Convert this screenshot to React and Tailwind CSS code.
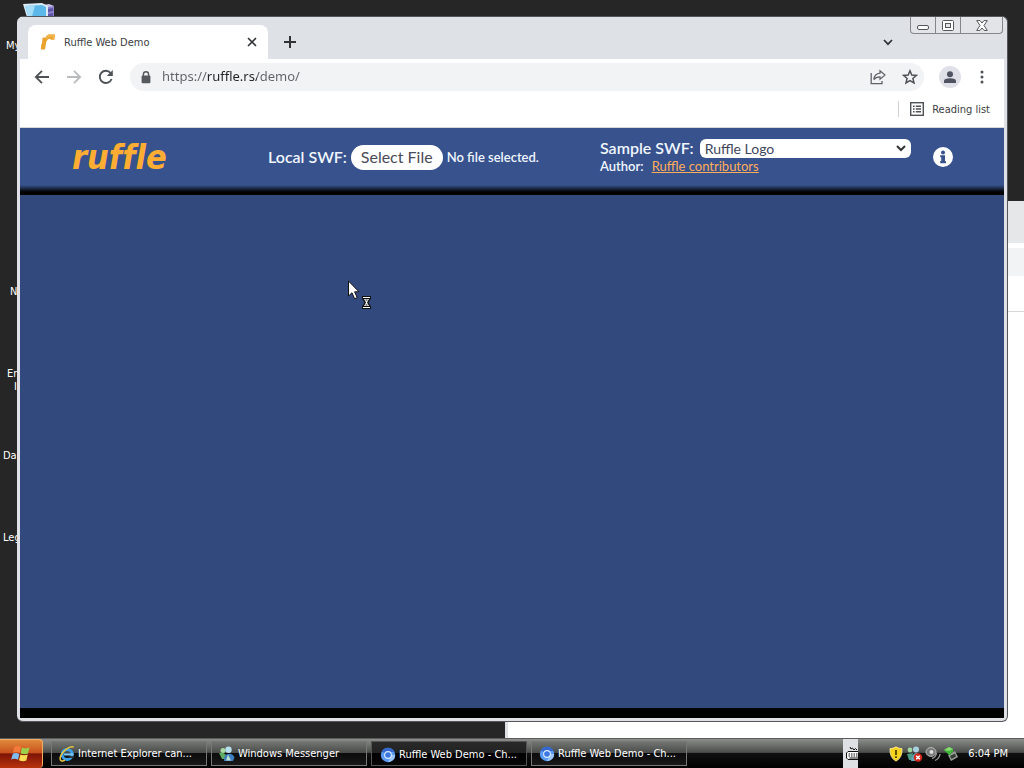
import React from "react";

const UI = "font-['DejaVu_Sans_Condensed','DejaVu_Sans',sans-serif] [font-stretch:condensed]";

const desktopLabels = [
  { text: "My", pad: "pl-[6px]" },
  { text: "", pad: "pl-0" },
  { text: "", pad: "pl-0" },
  { text: "N", pad: "pl-[10px]" },
  { text: "En", second: "I", pad: "pl-[7px]" },
  { text: "Da", pad: "pl-[3px]" },
  { text: "Leg", pad: "pl-[3px]" },
];

function ComputerIcon() {
  return (
    <svg className="absolute left-[22px] top-[2px]" width="34" height="30" viewBox="0 0 34 30" aria-hidden="true">
      <path d="M21 3 L32 4 V22 L21 24 Z" fill="#8d84c8" />
      <path d="M21 3 L27 2 L32 4 L26 5 Z" fill="#c9c5ea" />
      <path d="M26 7 L31 6 V9 L26 10 Z M26 12 L31 11 V14 L26 15 Z" fill="#5d54a8" />
      <path d="M1 2 L20 1 L26 4 V22 L7 22 Z" fill="#dcebf6" />
      <path d="M3 4 L20 3 L24 5 V20 L8 20 Z" fill="#5cb8e8" />
      <path d="M3 4 L13 3.5 L9 18 L8 20 Z" fill="#a5dcf6" />
    </svg>
  );
}

function Favicon() {
  return (
    <svg width="16" height="18" viewBox="0 0 16 18" aria-hidden="true">
      <path d="M2.6 4.5 L6 4.5 L6.4 3 L8.4 1.5 L15 1.5 L14.2 6.8 L10.4 6.8 L10.6 5.6 L8 6.2 L6.4 8.6 L5.8 11.5 L5 16.5 L.8 16.5 L1.4 11 L2 10.500 Z" fill="#eaa12e" />
      <path d="M6.4 3 L8.4 1.5 L15 1.5 L14.2 6.8 L12.4 6.8 L12.6 3.8 L9 4 L5.8 7 Z" fill="#f3b44a" />
    </svg>
  );
}

function WindowFlag() {
  return (
    <svg width="22" height="20" viewBox="0 0 22 20" aria-hidden="true">
      <path d="M4.5 2.8 Q8 1 11 3 L9.6 8.8 Q6.5 7.3 3 8.6 Z" fill="#f47a3c" />
      <path d="M12 3.5 Q15.5 5.3 19.5 3.6 L18 9.5 Q14.5 11 10.6 9.3 Z" fill="#9bd04c" />
      <path d="M2.8 9.7 Q6 8.3 9.4 9.9 L8 15.7 Q4.5 14 1.2 15.5 Z" fill="#7fbcf2" />
      <path d="M10.4 10.4 Q14 12 17.8 10.5 L16.3 16.5 Q13 18 9 16.2 Z" fill="#ffdd55" />
    </svg>
  );
}

function IeIcon() {
  return (
    <svg width="16" height="16" viewBox="0 0 16 16" aria-hidden="true">
      <circle cx="8.2" cy="8.4" r="5" fill="none" stroke="#3b9fe8" strokeWidth="3" />
      <path d="M5 8.4 H14.5" stroke="#7cc8f8" strokeWidth="2.2" />
      <path d="M10 10.2 H15 V12 H10 Z" fill="#333" />
      <path d="M14.8 1.2 C11 -.8 2.6 5.4 1.2 11.5 C.6 14.8 2.8 16 6 14.2" fill="none" stroke="#e9c63a" strokeWidth="1.5" />
    </svg>
  );
}

function MessengerIcon() {
  return (
    <svg width="16" height="16" viewBox="0 0 16 16" aria-hidden="true">
      <circle cx="4" cy="4.5" r="2.5" fill="#a8dca2" />
      <path d="M0 7 Q5 6 7 9 L6 13 H3 Z" fill="#5fae62" />
      <circle cx="9.5" cy="3.8" r="3.2" fill="#b9e0f0" />
      <path d="M5 15 Q5 8 9 8 Q13.5 7 15.5 11.5 L14 15 Z" fill="#3f7fc0" />
      <path d="M9 8.5 L12 14.5 H7 Z" fill="#b9e4cf" />
    </svg>
  );
}

function ChromiumIcon() {
  return (
    <svg width="16" height="16" viewBox="0 0 16 16" aria-hidden="true">
      <circle cx="8" cy="8" r="7.2" fill="#5a9bf6" />
      <path d="M8 8 L1.8 4.4 A7.2 7.2 0 0 1 14.6 5 H8 Z" fill="#3468cc" />
      <path d="M8 8 H15.2 A7.2 7.2 0 0 1 8 15.2 L11 9.5 Z" fill="#9cc6fa" />
      <circle cx="8" cy="8" r="3.9" fill="#dcebff" />
      <circle cx="8" cy="8" r="2.8" fill="#3a78e0" />
    </svg>
  );
}

const tasks = [
  { label: "Internet Explorer can...", Icon: IeIcon },
  { label: "Windows Messenger", Icon: MessengerIcon },
  { label: "Ruffle Web Demo - Ch...", Icon: ChromiumIcon, active: true },
  { label: "Ruffle Web Demo - Ch...", Icon: ChromiumIcon },
];

function TabStrip() {
  return (
    <div className="flex h-[42px] items-end bg-[#dee1e6] pl-2">
      <div className="flex h-[34px] w-60 items-center rounded-t-lg bg-white pl-3 pr-2">
        <Favicon />
        <span className="ml-2 flex-1 pt-[2px] text-[11px] text-[#3c4043]">Ruffle Web Demo</span>
        <button aria-label="Close tab" className="flex size-4 items-center justify-center">
          <svg width="10" height="10" viewBox="0 0 10 10" aria-hidden="true">
            <path d="M1 1 L9 9 M9 1 L1 9" stroke="#303236" strokeWidth="1.6" />
          </svg>
        </button>
      </div>
      <button aria-label="New tab" className="flex h-[34px] w-11 items-center justify-center">
        <svg width="12" height="12" viewBox="0 0 12 12" aria-hidden="true">
          <path d="M6 0 V12 M0 6 H12" stroke="#303236" strokeWidth="2" />
        </svg>
      </button>
      <div className="flex-1" />
      <button aria-label="Search tabs" className="flex h-[34px] w-11 items-center justify-center">
        <svg width="10" height="7" viewBox="0 0 10 7" aria-hidden="true">
          <path d="M1 1 L5 5.2 L9 1" fill="none" stroke="#303236" strokeWidth="1.7" />
        </svg>
      </button>
      <div className="mr-px flex h-[17px] self-start rounded-b border border-t-0 border-[#85868a] bg-[#e3e4e7]">
        <button aria-label="Minimize" className="flex w-[25px] items-end justify-center border-r border-[#85868a] pb-[3px]">
          <svg width="12" height="5" viewBox="0 0 12 5" aria-hidden="true">
            <rect x=".5" y=".5" width="11" height="4" rx="1.5" fill="#fff" stroke="#55565a" />
          </svg>
        </button>
        <button aria-label="Maximize" className="flex w-[25px] items-center justify-center border-r border-[#85868a]">
          <svg width="12" height="11" viewBox="0 0 12 11" aria-hidden="true">
            <rect x=".5" y=".5" width="11" height="10" rx="1" fill="#fff" stroke="#55565a" />
            <rect x="3.5" y="3.5" width="5" height="4" fill="#e3e4e7" stroke="#55565a" />
          </svg>
        </button>
        <button aria-label="Close" className="flex w-[41px] items-center justify-center">
          <svg width="12" height="11" viewBox="0 0 12 11" aria-hidden="true">
            <path d="M.7 .6 H4 L6 3 L8 .6 H11.3 L8 5.5 L11.3 10.4 H8 L6 8 L4 10.4 H.7 L4 5.5 Z" fill="#fff" stroke="#55565a" />
          </svg>
        </button>
      </div>
    </div>
  );
}

function Toolbar() {
  return (
    <div className="flex h-9 items-center pl-[14px] pr-[13px] text-[#5f6368]">
      <button aria-label="Back" className="flex w-4 justify-center">
        <svg width="16" height="16" viewBox="0 0 16 16" aria-hidden="true">
          <path d="M15 8 H2.4 M8 1.8 L1.8 8 L8 14.2" fill="none" stroke="#4e5256" strokeWidth="1.8" />
        </svg>
      </button>
      <button aria-label="Forward" className="ml-4 flex w-4 justify-center">
        <svg width="16" height="16" viewBox="0 0 16 16" aria-hidden="true">
          <path d="M1 8 H13.6 M8 1.8 L14.2 8 L8 14.2" fill="none" stroke="#b9bbbe" strokeWidth="1.8" />
        </svg>
      </button>
      <button aria-label="Reload" className="ml-4 flex w-4 justify-center">
        <svg width="16" height="16" viewBox="0 0 16 16" aria-hidden="true">
          <path d="M13.6 10 A6.1 6.1 0 1 1 12.6 4" fill="none" stroke="#4e5256" strokeWidth="1.9" />
          <path d="M14.8 1 V7 H8.8 Z" fill="#4e5256" />
        </svg>
      </button>
      <div className="ml-4 flex h-7 flex-1 items-center rounded-full bg-[#f1f3f4] pl-[11px] pr-[6px]">
        <svg width="10" height="13" viewBox="0 0 10 13" aria-hidden="true">
          <path d="M2.4 5 V3.4 A2.6 2.6 0 0 1 7.6 3.4 V5" fill="none" stroke="#55595d" strokeWidth="1.4" />
          <rect x=".6" y="4.6" width="8.8" height="7.6" rx="1" fill="#55595d" />
        </svg>
        <input
          aria-label="Address"
          defaultValue="https://ruffle.rs/demo/"
          className="ml-[11px] min-w-0 flex-1 bg-[linear-gradient(90deg,#5f6368_45px,#202124_45px,#202124_95px,#5f6368_95px)] bg-clip-text font-['Noto_Sans',sans-serif] text-[13px] text-transparent outline-none"
        />
        <button aria-label="Share" className="flex">
          <svg width="16" height="16" viewBox="0 0 16 16" aria-hidden="true">
            <path d="M1.2 4 V14.6 H12 V12" fill="none" stroke="#5f6368" strokeWidth="1.3" />
            <path d="M10 1.8 L15 6 L10 10.2 V7.8 C7 7.8 5.2 8.6 3.8 10.6 C4.2 7 6.4 4.6 10 4.2 Z" fill="none" stroke="#5f6368" strokeWidth="1.2" />
          </svg>
        </button>
        <button aria-label="Bookmark this tab" className="ml-4 flex">
          <svg width="16" height="16" viewBox="0 0 16 16" aria-hidden="true">
            <path d="M8 1.8 L9.8 6 L14.4 6.4 L10.9 9.4 L12 13.9 L8 11.5 L4 13.9 L5.1 9.4 L1.6 6.4 L6.2 6 Z" fill="none" stroke="#4e5256" strokeWidth="1.5" />
          </svg>
        </button>
      </div>
      <button aria-label="Profile" className="ml-[15px] flex size-[22px] items-center justify-center rounded-full bg-[#dfe0e8]">
        <svg width="14" height="14" viewBox="0 0 14 14" aria-hidden="true">
          <circle cx="7" cy="4.2" r="3" fill="#4f5260" />
          <path d="M1 13 V11 Q1 8.2 7 8.2 Q13 8.2 13 11 V13 Z" fill="#4f5260" />
        </svg>
      </button>
      <button aria-label="Menu" className="ml-3 flex w-[18px] justify-center">
        <svg width="4" height="14" viewBox="0 0 4 14" aria-hidden="true">
          <circle cx="2" cy="2" r="1.5" fill="#4e5256" />
          <circle cx="2" cy="7" r="1.5" fill="#4e5256" />
          <circle cx="2" cy="12" r="1.5" fill="#4e5256" />
        </svg>
      </button>
    </div>
  );
}

function BookmarksBar() {
  return (
    <div className="flex h-[33px] items-center justify-end border-b border-[#d5d7db] pb-1 pr-[14px]">
      <span className="h-4 w-px bg-[#cfd1d5]" />
      <button className="ml-[11px] flex items-center gap-2 text-[11px] text-[#3c4043]">
        <svg width="14" height="14" viewBox="0 0 14 14" aria-hidden="true">
          <rect x=".7" y=".7" width="12.6" height="12.6" fill="none" stroke="#4e5256" strokeWidth="1.4" />
          <path d="M3 4.2 H4.6 M3 7 H4.6 M3 9.8 H4.6 M5.8 4.2 H11 M5.8 7 H11 M5.8 9.8 H11" stroke="#4e5256" strokeWidth="1.4" />
        </svg>
        <span className="pt-[2px]">Reading list</span>
      </button>
    </div>
  );
}

function DemoHeader() {
  return (
    <header className="bg-black font-[Lato,sans-serif] text-[#f0f6ff]">
      <div className="grid h-[67px] grid-cols-[248px_332px_1fr] items-center bg-[linear-gradient(180deg,#37528c_0,#37528c_57px,#000_64px)] pb-[9px]">
        <a href="#home" aria-label="Ruffle" className="pl-[52px] font-['DejaVu_Sans_Condensed','DejaVu_Sans',sans-serif] text-[34px] leading-[44px] font-bold text-[#ffad33] italic [font-variant-ligatures:none]">
          ruffle
        </a>
        <div className="flex items-center">
          <span className="text-base font-semibold whitespace-nowrap">Local SWF:</span>
          <button className="ml-1 h-[25px] rounded-full bg-white px-[10px] text-base leading-6 whitespace-nowrap text-[#4b4b58]">Select File</button>
          <span className="ml-1 pt-[2px] text-[13px] font-semibold whitespace-nowrap">No file selected.</span>
        </div>
        <div className="flex items-center pr-[51px]">
          <div className="flex-1">
            <div className="flex h-5 items-center">
              <label htmlFor="sample" className="text-base font-semibold whitespace-nowrap">Sample SWF:</label>
              <div className="relative ml-[6px] flex-1">
                <select id="sample" className="block h-[19px] w-full appearance-none rounded-md bg-white pl-[5px] text-sm leading-[19px] text-[#40465c]">
                  <option>Ruffle Logo</option>
                </select>
                <svg className="pointer-events-none absolute top-[6px] right-[5px]" width="10" height="7" viewBox="0 0 10 7" aria-hidden="true">
                  <path d="M1 1 L5 5 L9 1" fill="none" stroke="#333" strokeWidth="2" />
                </svg>
              </div>
            </div>
            <div className="flex h-[18px] items-center gap-2 text-[13px] font-semibold whitespace-nowrap">
              <span>Author:</span>
              <a href="#author" className="font-normal text-[#ffad5c] underline">Ruffle contributors</a>
            </div>
          </div>
          <button aria-label="Information" className="ml-[22px] flex">
            <svg width="20" height="20" viewBox="0 0 20 20" aria-hidden="true">
              <circle cx="10" cy="10" r="10" fill="#fff" />
              <circle cx="10" cy="5.4" r="2" fill="#37528c" />
              <path d="M7.2 8.2 H12 V14 H12.9 V16.2 H7.2 V14 H8.2 V10.2 H7.2 Z" fill="#37528c" />
            </svg>
          </button>
        </div>
      </div>
    </header>
  );
}

function Cursor() {
  return (
    <svg className="absolute top-[263px] left-[330px]" width="28" height="32" viewBox="0 0 28 32" aria-hidden="true">
      <path d="M1.5 1 V16 L5 12.8 L7.6 18.8 L10.2 17.6 L7.6 11.8 H12 Z" fill="#fff" stroke="#111" />
      <path d="M15 16 H24 V18.5 L21.500 22.500 L24 26.500 V29 H15 V26.500 L17.500 22.500 L15 18.500 Z" fill="#111" />
      <path d="M16 17.5 H23 M16 27.5 H23" stroke="#fff" />
      <path d="M17 19 H22 L20 22.5 L22 26 H17 L19 22.5 Z" fill="#fff" />
      <path d="M18.5 20 H20.5 M18.5 25 H20.5" stroke="#111" />
    </svg>
  );
}

function TrayIcons() {
  return (
    <div className="flex items-center gap-[2px]">
      <svg width="16" height="16" viewBox="0 0 16 16" aria-label="Security alert" role="img">
        <path d="M8 .8 Q11 2.8 14 2.6 Q14.6 11.5 8 15.2 Q1.4 11.5 2 2.6 Q5 2.8 8 .8 Z" fill="#f5d21c" stroke="#fbf0a0" strokeWidth=".8" />
        <path d="M7.2 4 H8.8 V9 H7.2 Z M7.2 10.3 H8.8 V12 H7.2 Z" fill="#3a3200" />
      </svg>
      <svg width="17" height="16" viewBox="0 0 17 16" aria-label="Messenger offline" role="img">
        <circle cx="4" cy="4" r="2.4" fill="#9fd6a0" />
        <circle cx="10" cy="3.5" r="3" fill="#a9cfe2" />
        <path d="M1 8 L7 7 L6 14 H3 Z" fill="#4d9a86" />
        <path d="M5 15 Q6 7 10 7 Q14 7 15 12 L13 15 Z" fill="#63a5b5" />
        <circle cx="12" cy="11.5" r="4.2" fill="#d6261c" />
        <path d="M10.2 9.7 L13.8 13.3 M13.8 9.7 L10.2 13.3" stroke="#fff" strokeWidth="1.5" />
      </svg>
      <svg width="16" height="16" viewBox="0 0 16 16" aria-label="Volume" role="img">
        <ellipse cx="6" cy="6" rx="5" ry="4.4" fill="#777" stroke="#bbb" />
        <circle cx="6.5" cy="6" r="2" fill="#ddd" />
        <path d="M7 12.5 Q11 11.5 11.5 7 M10 14.5 Q14.5 12.5 15 8" fill="none" stroke="#999" strokeWidth="1.3" />
      </svg>
      <svg width="16" height="16" viewBox="0 0 16 16" aria-label="Safely remove hardware" role="img">
        <path d="M5 9 L12 5 L15 11 L8 15 Z" fill="#9a9f9a" />
        <path d="M7 10 L12 7.5 L13 10.5 L8.5 13 Z" fill="#363b36" />
        <path d="M1 4 L6 1 L10 3 V6 L8 7 V9.5 L5 8 Z" fill="#3fb53a" />
        <path d="M1 4 L6 1 L10 3 L6 5 Z" fill="#86dc6c" />
      </svg>
    </div>
  );
}

function Taskbar() {
  return (
    <footer className="flex h-[30px] items-center border-t border-[#5c5c5c] bg-[linear-gradient(180deg,#8b8d8b_0,#4c4e4c_46%,#101010_50%,#000_100%)] text-[11px] text-white">
      <button aria-label="Start" className="flex h-full w-[43px] items-center justify-center rounded-r border-t border-r border-[#f5ad62] bg-[linear-gradient(180deg,#e08a3c_0,#c9511c_45%,#7d1406_50%,#b8330c_100%)]">
        <WindowFlag />
      </button>
      <nav className="ml-2 flex gap-1">
        {tasks.map(({ label, Icon, active }, i) => (
          <button
            key={i}
            className={
              active
                ? "flex h-[25px] w-[156px] items-center gap-[3px] border border-[#555] bg-[linear-gradient(180deg,#292929_0,#222_46%,#000_50%,#080808_100%)] pt-[2px] pl-2 whitespace-nowrap"
                : "flex h-[25px] w-[156px] items-center gap-[3px] border border-[#777] bg-[linear-gradient(180deg,#727472_0,#4a4c4a_46%,#0c0c0c_50%,#181818_100%)] pl-[7px] whitespace-nowrap"
            }
          >
            <Icon />
            <span className="pt-[2px]">{label}</span>
          </button>
        ))}
      </nav>
      <div className="flex-1" />
      <button aria-label="Language bar" className="flex h-full w-[15px] items-center bg-[#dfe0e4] pl-[3px]">
        <svg width="12" height="14" viewBox="0 0 12 14" aria-hidden="true">
          <path d="M4 0 L5 2 L6.5 1 L8 3 L9.5 1.5 L11 3" fill="none" stroke="#111" />
          <path d="M12 4.5 H2 L.5 6 V11 L2 12.5 H12" fill="#fff" stroke="#111" />
          <path d="M2.5 7 H12 M2.5 9 H12" stroke="#111" strokeDasharray="1.5 1" />
          <path d="M3.5 11 H12" stroke="#111" />
        </svg>
      </button>
      <div className="flex items-center gap-[9px] pr-4 pl-[30px] whitespace-nowrap">
        <TrayIcons />
        <time className="pt-[2px]">6:04 PM</time>
      </div>
    </footer>
  );
}

export default function App() {
  return (
    <div className={`flex h-screen flex-col overflow-hidden bg-[#262626] ${UI}`}>
      <div className="relative min-h-0 flex-1 overflow-hidden">
        <ComputerIcon />
        <ul className="flex flex-col pt-[39px] text-[11px] leading-[13px] text-white">
          {desktopLabels.map(({ text, second, pad }, i) => (
            <li key={i} className={`h-[82px] whitespace-nowrap ${pad}`}>
              {text}
              {second && <div className="pl-[7px]">{second}</div>}
            </li>
          ))}
        </ul>

        <div className="absolute top-[201px] right-0 bottom-0 left-[505px] border-l-[3px] border-[#dfe0e4] bg-white">
          <div className="h-[42px] bg-[#e6e7e9]" />
          <div className="mt-[5px] h-7 bg-[#f1f3f4]" />
          <div className="h-9 border-b border-[#d5d7db]" />
        </div>

        <main className="absolute top-4 right-4 bottom-4 left-[17px] flex flex-col overflow-hidden rounded-md border-t border-r border-b border-[#55565a] bg-[#dfe1e6] pr-[3px] pb-[3px] pl-[3px]">
          <div className="bg-white">
            <TabStrip />
            <Toolbar />
            <BookmarksBar />
          </div>
          <DemoHeader />
          <div className="min-h-0 flex-1 bg-[#31497d]" />
          <div className="h-[10px] bg-black" />
          <Cursor />
        </main>
      </div>
      <Taskbar />
    </div>
  );
}
